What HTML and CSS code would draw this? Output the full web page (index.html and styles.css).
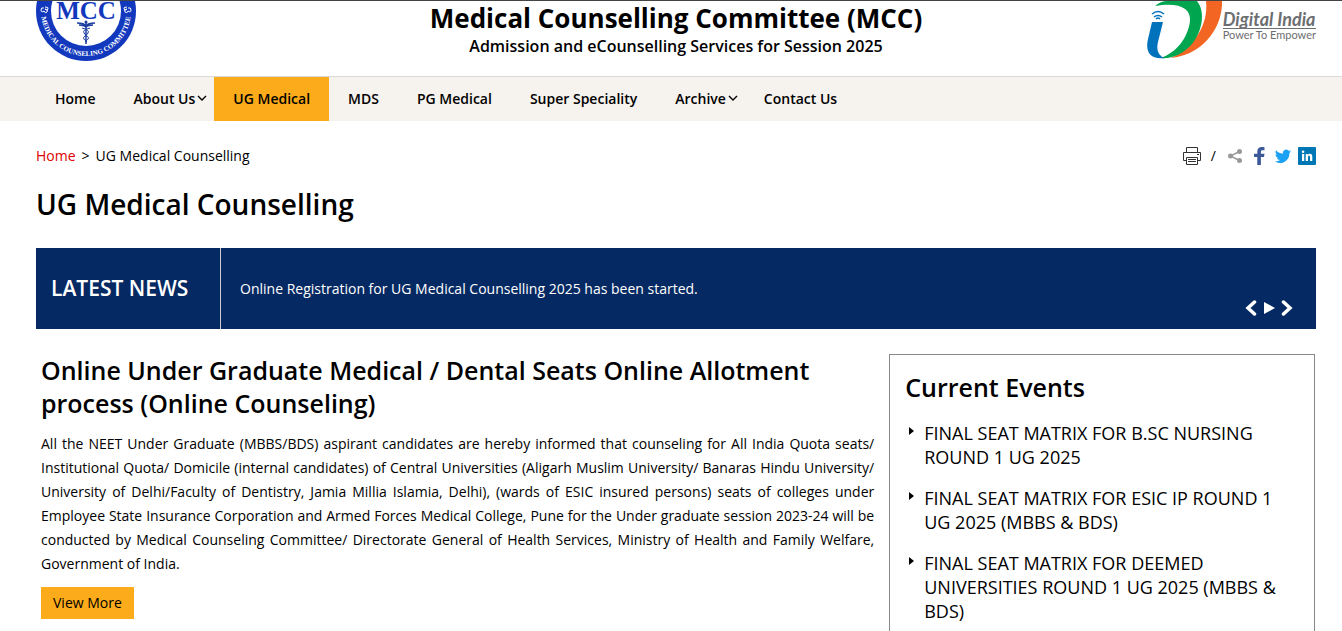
FILE: index.html
```html
<!DOCTYPE html>
<html lang="en">
<head>
    <meta charset="UTF-8">
    <meta name="viewport" content="width=device-width, initial-scale=1.0">
    <title>UG Medical Counselling | Medical Counselling Committee (MCC)</title>
    <link rel="stylesheet" href="styles.css">
</head>
<body>

<header class="site-header">
    <a href="#" class="mcc-logo" aria-label="Medical Counseling Committee">
        <svg width="100" height="60" viewBox="0 40 100 60">
            <circle cx="50" cy="50" r="50" fill="#1238bd"/>
            <circle cx="50" cy="50" r="35" fill="#fff"/>
            <path id="ring" d="M5 50a45 45 0 0 0 90 0" fill="none"/>
            <text class="seal-name" x="50" y="58" text-anchor="middle">MCC</text>
            <text class="seal-ring" text-anchor="middle"><textPath href="#ring" startOffset="50%">MEDICAL COUNSELING COMMITTEE</textPath></text>
            <g fill="none" stroke="#fff" stroke-width="1">
                <path d="M8 47q-3-1-3 2t3 1M9 46q4 0 3 2t-3 0q4 1 2 3t-3-1"/>
                <path d="M92 47q3-1 3 2t-3 1M91 46q-4 0-3 2t3 0q-4 1-2 3t3-1"/>
            </g>
            <!-- caduceus -->
            <g fill="none" stroke="#1c3f9f">
                <path d="M50 61v22" stroke-width="1.500"/>
                <path d="M41 62q7 0 9 3q2-3 9-3M43 64q5 0 7 2q2-2 7-2" stroke-width="1.500"/>
                <path d="M46 67q8 2 6 5t-4 4t3 5M54 67q-8 2-6 5t4 4t-3 5"/>
            </g>
            <circle cx="50" cy="61" r="1.500" fill="#1c3f9f"/>
        </svg>
    </a>
    <div class="site-title">
        <p class="title-main">Medical Counselling Committee (MCC)</p>
        <p class="title-sub">Admission and eCounselling Services for Session 2025</p>
    </div>
    <a href="#" class="digital-logo" aria-label="Digital India">
        <svg width="76" height="58" viewBox="0 0 76 58">
            <path d="M59 0h16C76 22 60 53 24 57C46 47 62 24 59 0z" fill="#f26522"/>
            <path d="M8 5Q14 0 20 0H50C59 11 55 31 45 43C36 53 26 58 13 57C30 52 41 36 43 20C44 7 32 1 8 5z" fill="#00a54f"/>
            <path d="M5 21H16L11 41Q8 54 18 57C3 59-2 51 1 38z" fill="#0072bc"/>
            <g fill="none" stroke="#0072bc" stroke-width="1.500">
                <path d="M5 13q6-5 12 0M7 16q4-3 8 0M9 18q2-2 4 0"/>
            </g>
        </svg>
        <span class="digital-text">
            <span class="digital-name">Digital India</span>
            <span class="digital-tag">Power To Empower</span>
        </span>
    </a>
</header>

<nav class="main-nav">
    <ul>
        <li><a href="#">Home</a></li>
        <li class="has-menu"><a href="#">About Us<svg width="10" height="8" viewBox="0 0 10 8"><path d="M1 1l4 4 4-4"/></svg></a></li>
        <li class="active"><a href="#">UG Medical</a></li>
        <li><a href="#">MDS</a></li>
        <li><a href="#">PG Medical</a></li>
        <li><a href="#">Super Speciality</a></li>
        <li class="has-menu"><a href="#">Archive<svg width="10" height="8" viewBox="0 0 10 8"><path d="M1 1l4 4 4-4"/></svg></a></li>
        <li><a href="#">Contact Us</a></li>
    </ul>
</nav>

<main class="container">
    <div class="page-bar">
        <div class="breadcrumb"><a href="#">Home</a><span>&gt;</span><span>UG Medical Counselling</span></div>
        <div class="page-tools">
            <button aria-label="Print">
                <svg width="18" height="18" viewBox="0 0 18 18" fill="none" stroke="#333">
                    <path d="M3.500 5.500v-5h11v5M3.500 13.500h-3v-8h17v8h-3M3.500 10.500h11v7h-11zM5 12.500h8M5 14.500h8"/>
                    <path d="M14 7.500h2"/>
                </svg>
            </button>
            <span>/</span>
            <div class="share-links">
                <a href="#" aria-label="Share">
                    <svg width="14" height="14" viewBox="0 0 14 14" fill="#999">
                        <path d="M11.500 2.500L2.500 7l9 4.500" fill="none" stroke="#999" stroke-width="1.500"/>
                        <circle cx="2.500" cy="7" r="2.500"/><circle cx="11.500" cy="2.500" r="2.500"/><circle cx="11.500" cy="11.500" r="2.500"/>
                    </svg>
                </a>
                <a href="#" aria-label="Facebook">
                    <svg width="11" height="18" viewBox="0 0 11 18"><path d="M3.300 18V10H0V6.700h3.300V4.500C3.300 1.500 5 0 7.700 0c1.300 0 2.500.1 2.800.2v3H8.600C7.200 3.200 6.900 3.900 6.900 4.900v1.800h3.600L10 10H6.900v8z" fill="#3b5998"/></svg>
                </a>
                <a href="#" aria-label="Twitter">
                    <svg width="16" height="14" viewBox="0 0 16 13"><path d="M16 1.800a6 6 0 0 1-1.900.5A3.300 3.300 0 0 0 15.500.4a6 6 0 0 1-2 .8A3.300 3.300 0 0 0 7.900 4.200 9.300 9.300 0 0 1 1.100.8 3.300 3.300 0 0 0 2.100 5.200 3 3 0 0 1 .6 4.800a3.300 3.300 0 0 0 2.700 3.300 3 3 0 0 1-1.500.1A3.300 3.300 0 0 0 5 10.500 6.600 6.600 0 0 1 0 11.900 9.300 9.300 0 0 0 14.400 3.500 6 6 0 0 0 16 1.800z" fill="#1da1f2"/></svg>
                </a>
                <a href="#" aria-label="LinkedIn">
                    <svg width="18" height="18" viewBox="0 0 18 18">
                        <rect width="18" height="18" rx="1" fill="#0077b5"/>
                        <path d="M4 7h2.200v7H4zM7.700 7h2.100v1c1-1.700 4.500-1.700 4.500 1.500V14H12v-4c0-1.800-2-1.600-2 0v4H7.700z" fill="#fff"/>
                        <circle cx="5.100" cy="4.800" r="1.300" fill="#fff"/>
                    </svg>
                </a>
            </div>
        </div>
    </div>

    <h1>UG Medical Counselling</h1>

    <section class="news">
        <h2>LATEST NEWS</h2>
        <p>Online Registration for UG Medical Counselling 2025 has been started.</p>
        <div class="news-controls">
            <button aria-label="Previous"><svg width="12" height="16" viewBox="0 0 12 16"><path d="M9.500 2L3 8l6.500 6" fill="none" stroke="#fff" stroke-width="3.500" stroke-linecap="round"/></svg></button>
            <button aria-label="Play"><svg width="12" height="16" viewBox="0 0 12 16"><path d="M1 2l11 6-11 6z" fill="#fff"/></svg></button>
            <button aria-label="Next"><svg width="12" height="16" viewBox="0 0 12 16"><path d="M2.500 2L9 8l-6.500 6" fill="none" stroke="#fff" stroke-width="3.500" stroke-linecap="round"/></svg></button>
        </div>
    </section>

    <div class="columns">
        <article class="about">
            <h2>Online Under Graduate Medical / Dental Seats Online Allotment process (Online Counseling)</h2>
            <p>All the NEET Under Graduate (MBBS/BDS) aspirant candidates are hereby informed that counseling for All India Quota seats/ Institutional Quota/ Domicile (internal candidates) of Central Universities (Aligarh Muslim University/ Banaras Hindu University/ University of Delhi/Faculty of Dentistry, Jamia Millia Islamia, Delhi), (wards of ESIC insured persons) seats of colleges under Employee State Insurance Corporation and Armed Forces Medical College, Pune for the Under graduate session 2023-24 will be conducted by Medical Counseling Committee/ Directorate General of Health Services, Ministry of Health and Family Welfare, Government of India.</p>
            <a href="#" class="btn">View More</a>
        </article>

        <aside class="events">
            <h2>Current Events</h2>
            <ul>
                <li><a href="#">FINAL SEAT MATRIX FOR B.SC NURSING ROUND 1 UG 2025</a></li>
                <li><a href="#">FINAL SEAT MATRIX FOR ESIC IP ROUND 1 UG 2025 (MBBS &amp; BDS)</a></li>
                <li><a href="#">FINAL SEAT MATRIX FOR DEEMED UNIVERSITIES ROUND 1 UG 2025 (MBBS &amp; BDS)</a></li>
            </ul>
        </aside>
    </div>
</main>

</body>
</html>
```
FILE: styles.css
```css
* {
    box-sizing: border-box;
}

body {
    margin: 0;
    font-family: "Open Sans", "Noto Sans", sans-serif;
    font-size: 14px;
    line-height: 24px;
    color: #000;
    background-color: #fff;
}

h1, h2, p, ul {
    margin: 0;
    padding: 0;
    font-weight: 600;
}

ul {
    list-style: none;
}

a {
    color: inherit;
    text-decoration: none;
}

button {
    padding: 0;
    border: none;
    background: none;
    cursor: pointer;
}

svg {
    display: block;
}

/* Header */
.site-header {
    display: grid;
    grid-template-columns: 1fr auto 1fr;
    align-items: start;
    height: 76px;
    padding: 0 26px 0 36px;
    border-top: 1px solid #444;
}

.seal-name {
    font: bold 25px "Liberation Serif", serif;
    fill: #1238bd;
}

.seal-ring {
    font: bold 7px "Liberation Serif", serif;
    fill: #fff;
}

.site-title {
    text-align: center;
}

.title-main {
    font-size: 26px;
    line-height: 34px;
    font-weight: 700;
}

.title-sub {
    font-size: 16px;
    line-height: 22px;
}

.digital-logo {
    display: flex;
    justify-self: end;
}

.digital-text {
    display: flex;
    flex-direction: column;
    padding-top: 9px;
    color: #6d6e71;
}

.digital-name {
    font: italic bold 18px/18px Lato, sans-serif;
    border-bottom: 1px solid #6d6e71;
}

.digital-tag {
    font: 11px/12px Lato, sans-serif;
}

/* Navigation */
.main-nav {
    padding: 0 36px;
    background-color: #f6f2ed;
    border-top: 1px solid #d9d9d9;
}

.main-nav ul {
    display: flex;
}

.main-nav a {
    display: flex;
    align-items: center;
    gap: 2px;
    height: 44px;
    padding: 0 19px;
    font-weight: 600;
}

.main-nav .has-menu a {
    padding-right: 7px;
}

.main-nav .active {
    background-color: #fcac1b;
}

.main-nav path {
    fill: none;
    stroke: #000;
    stroke-width: 1.4;
}

/* Page */
.container {
    padding: 23px 26px 0 36px;
}

.page-bar, .breadcrumb, .page-tools, .share-links {
    display: flex;
    align-items: center;
}

.page-bar {
    justify-content: space-between;
}

.breadcrumb {
    gap: 6px;
}

.breadcrumb a {
    color: #d00;
}

.page-tools {
    gap: 10px;
}

.share-links {
    gap: 6px;
}

.share-links a {
    display: flex;
    justify-content: center;
    width: 18px;
}

h1 {
    margin: 17px 0 25px;
    font-size: 28px;
    line-height: 38px;
}

.news {
    position: relative;
    display: flex;
    align-items: center;
    height: 81px;
    color: #fff;
    background-color: #052962;
}

.news h2 {
    width: 185px;
    padding-left: 15px;
    font-size: 21px;
    line-height: 81px;
    border-right: 1px solid #ccc;
}

.news p {
    padding-left: 19px;
    font-weight: 400;
}

.news-controls {
    position: absolute;
    right: 23px;
    bottom: 13px;
    display: flex;
    gap: 6px;
}

.columns {
    display: grid;
    grid-template-columns: 63fr 32fr;
    gap: 15px;
    margin: 25px 1px 0 0;
}

.about {
    padding-left: 5px;
}

.about h2, .events h2 {
    font-size: 25px;
    line-height: 33px;
}

.about p {
    margin: 12px 0 11px;
    font-weight: 400;
    text-align: justify;
}

.btn {
    display: inline-block;
    padding: 4px 12px;
    background-color: #fcac1b;
}

.events {
    padding: 16px 15px;
    border: 1px solid #888;
}

.events li {
    position: relative;
    margin-top: 17px;
    padding-left: 19px;
    font-size: 18px;
    font-weight: 400;
}

.events li::before {
    content: "";
    position: absolute;
    top: 6px;
    left: 4px;
    border: 4px solid transparent;
    border-left: 5px solid #000;
}
```
